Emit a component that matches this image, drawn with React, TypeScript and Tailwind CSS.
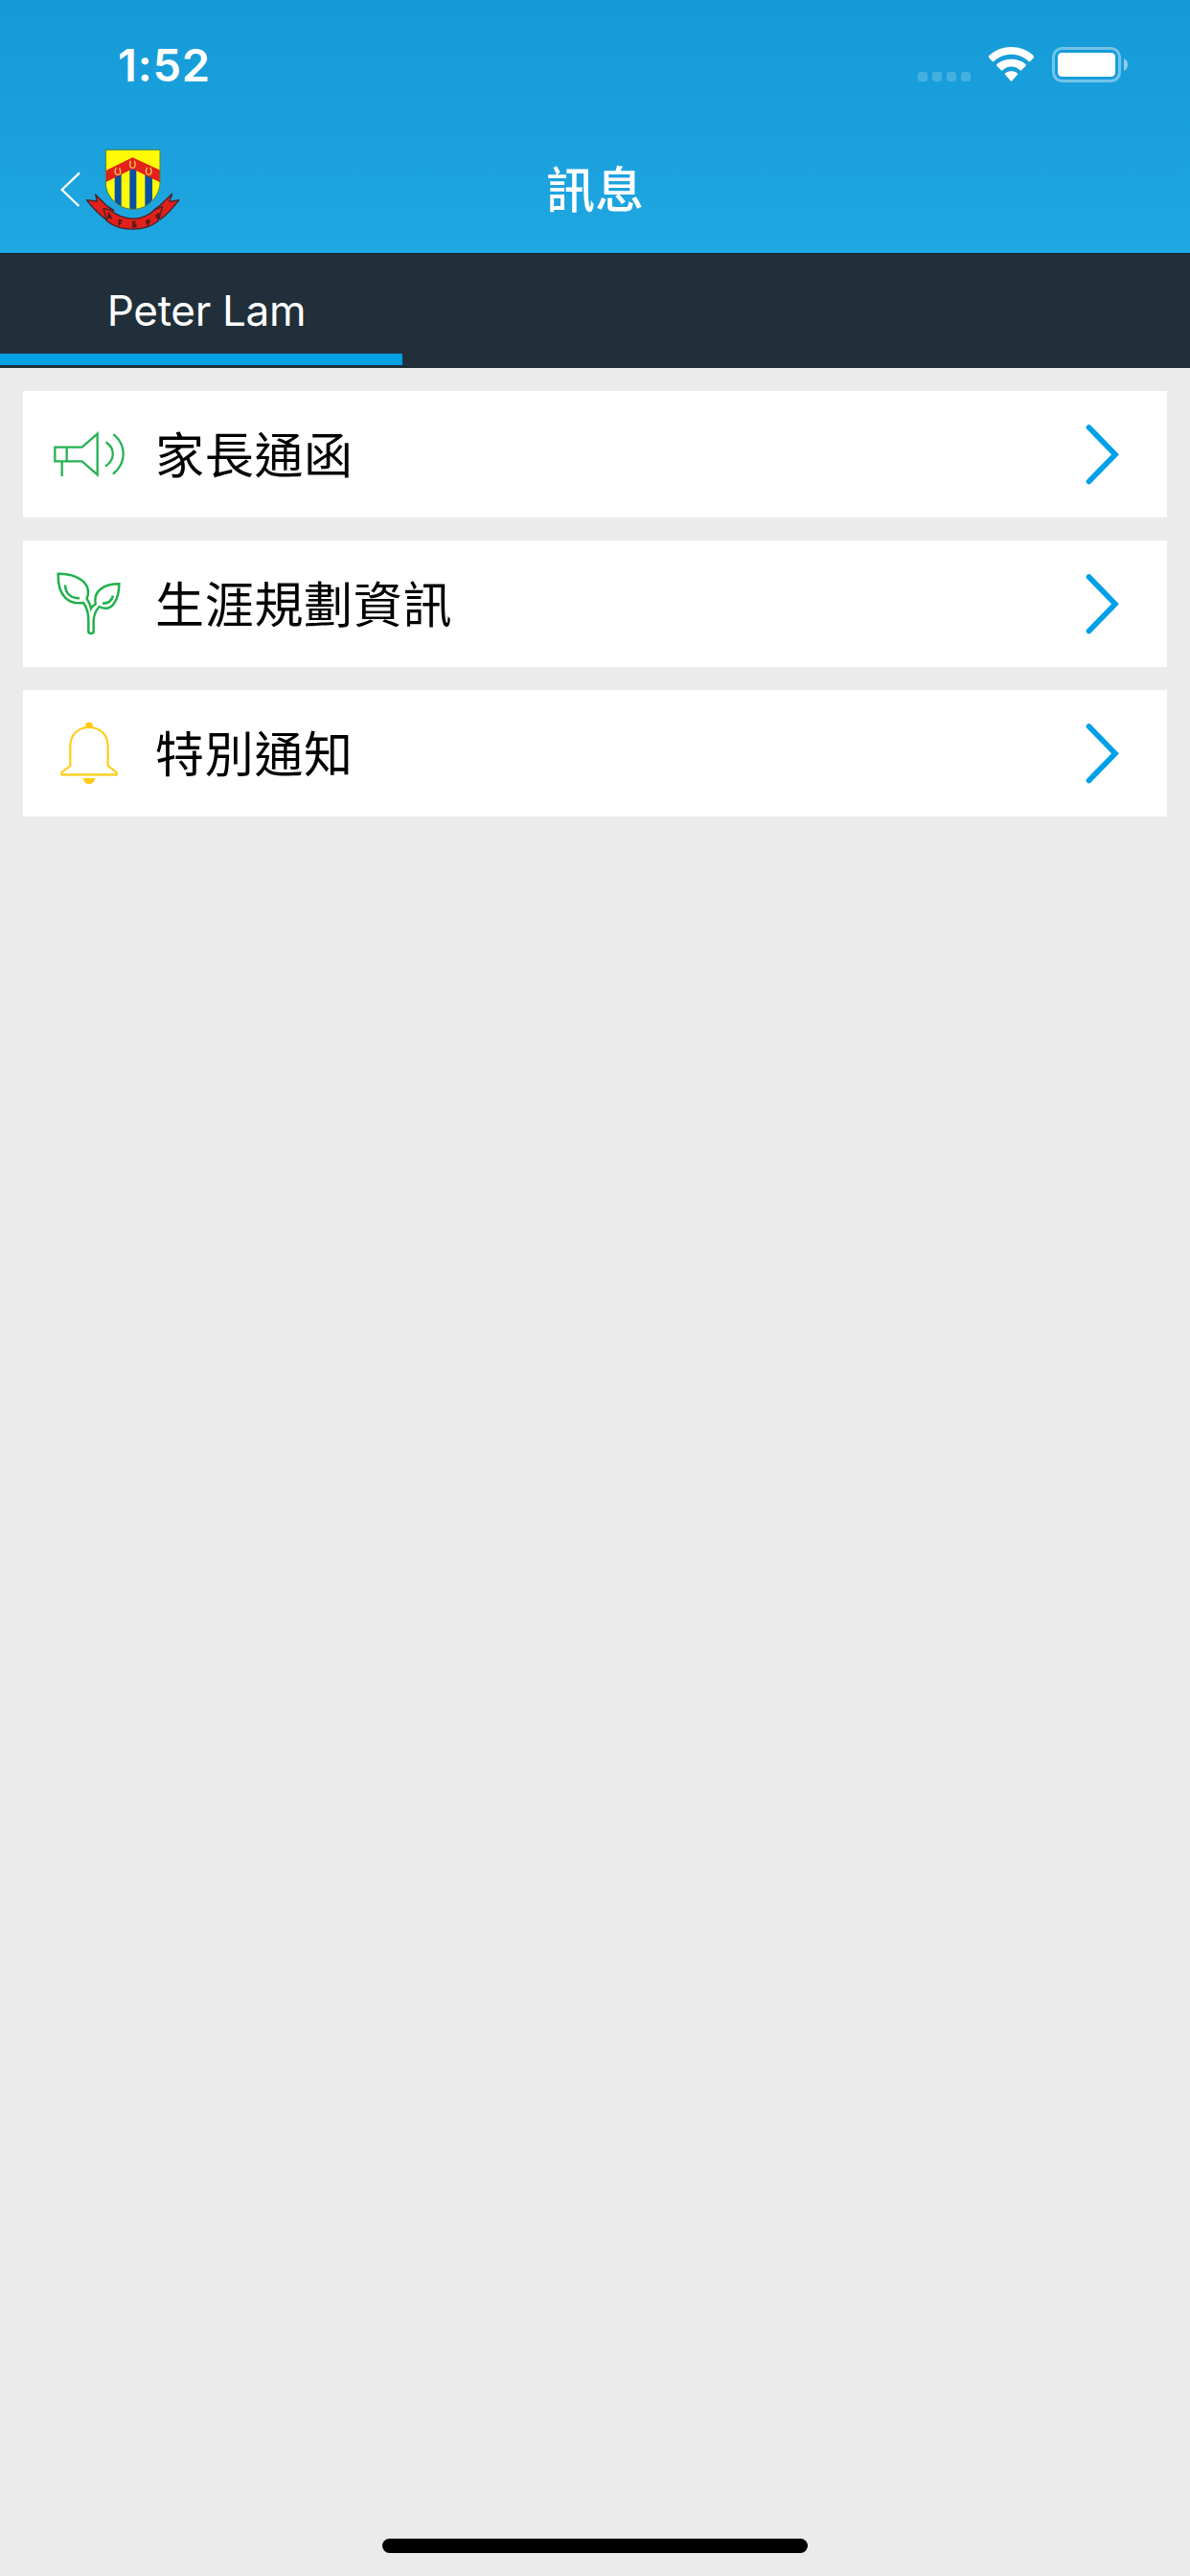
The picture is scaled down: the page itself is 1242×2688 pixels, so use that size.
import type { ReactNode } from "react";

function Megaphone() {
  return (
    <svg className="h-[90px] w-24 shrink-0" viewBox="36 27 288 270" fill="none" stroke="#28b254" strokeWidth="7">
      <path d="M82 140H167L215 98V226L167 184H82Z M119 140V184 M104 184V231" />
      <path d="M244 126C270 144 270 180 242 198 M267 101C306 134 306 188 266 222" strokeLinecap="round" />
    </svg>
  );
}

function Sprout() {
  return (
    <svg className="h-[90px] w-24 shrink-0" viewBox="36 45 288 270" fill="none" stroke="#22b14c" strokeWidth="7.5">
      <path d="M187 266V232C187 212 181 190 171 177C125 184 90 155 92 86C145 84 201 112 182 164C188 172 192 182 195 195C199 188 203 185 209 181C201 138 237 118 283 118C283 166 261 209 221 189C211 200 204 215 203 232V266C203 275 187 275 187 266Z" />
      <path d="M114 121C115 149 133 163 159 163 M264 155C260 171 248 179 231 179" />
    </svg>
  );
}

function Bell() {
  return (
    <svg className="h-[90px] w-24 shrink-0" viewBox="36 33 288 270" fill="none" stroke="#ffcc13" strokeWidth="6.5">
      <path d="M130 207V147C130 109 155 87 189 87C223 87 248 109 248 147V207L275 228V235H103V228Z" />
      <path d="M178 89V77Q178 71 184 71H194Q200 71 200 77V89Z M170 246H208C204 270 174 270 170 246Z" fill="#ffcc13" stroke="none" />
    </svg>
  );
}

function Crest() {
  return (
    <svg className="h-[120px] w-[160px]" viewBox="0 0 480 360">
      <defs>
        <clipPath id="shield">
          <path d="M211 49H381V156C378 195 343 235 297 235C250 235 213 195 211 156Z" />
        </clipPath>
      </defs>
      <path d="M129 121L74 174L127 225" fill="none" stroke="#fff" strokeWidth="7" />
      <g clipPath="url(#shield)">
        <path d="M205 45H390V240H205Z" fill="#fffa08" />
        <path d="M239 110H260V240H239Z M286 100H307V240H286Z M334 110H357V240H334Z" fill="#0751a2" />
        <path d="M205 117L295 73L390 117V155L295 109L205 153Z" fill="#e32119" />
        <path
          d="M243 106C237 120 241 127 249 127C257 127 260 120 254 106 M289 83C284 98 287 106 295 106C303 106 306 98 301 83 M340 104C334 119 338 127 346 127C354 127 356 119 351 104"
          fill="none"
          stroke="#f5c85a"
          strokeWidth="4"
        />
      </g>
      <path d="M211 49H381V156C378 195 343 235 297 235C250 235 213 195 211 156Z" fill="none" stroke="#56803b" strokeWidth="3" />
      <g fill="#df201b" stroke="#41262b" strokeWidth="4" strokeLinejoin="round">
        <path d="M151 206L184 210L179 189L213 223L236 238L213 268C190 252 169 229 151 206Z" />
        <path d="M441 206L411 211L419 187L381 223L361 238L382 267C405 251 423 229 441 206Z" />
        <path d="M204 233L225 237C268 273 326 274 365 236L389 227L375 272C333 305 259 307 215 272Z" />
      </g>
      <path
        d="M217 266L221 250L229 264 M218 261L226 258 M252 287L254 269L262 271 M253 278L260 279 M305 275H297V290H305V283H300 M338 271L344 286 M338 272L346 269L348 276L341 279 M368 254L378 268 M369 254L377 249L379 256L372 261"
        fill="none"
        stroke="#50191c"
        strokeWidth="5"
      />
    </svg>
  );
}

function StatusIcons() {
  return (
    <svg className="h-20 w-[260px]" viewBox="0 0 780 240">
      <g fill="#fff" fillOpacity=".2">
        <rect x="54" y="135" width="30" height="30" rx="9" />
        <rect x="99" y="135" width="30" height="30" rx="9" />
        <rect x="144" y="135" width="30" height="30" rx="9" />
        <rect x="189" y="135" width="30" height="30" rx="9" />
      </g>
      <g fill="#fff">
        <path d="M276 90Q274 87 277 84C316 48 377 48 416 84Q419 87 417 90L406 102Q403 104 400 101C369 73 324 73 293 101Q290 104 287 102Z" />
        <path d="M301 116Q299 113 302 110C327 90 366 90 391 110Q394 113 392 116L379 129Q376 132 373 129C357 115 336 115 320 129Q317 132 314 129Z" />
        <path d="M327 143Q325 140 329 138C339 131 354 131 364 138Q368 140 366 143L349 163Q346.500 166 344 163Z" />
        <rect x="492" y="75" width="180" height="75" rx="13" />
      </g>
      <rect x="478.500" y="61.500" width="207" height="102" rx="27" fill="none" stroke="#fff" strokeOpacity=".4" strokeWidth="9" />
      <path d="M699 93C715 97 715 128 699 132Z" fill="#fff" fillOpacity=".5" />
    </svg>
  );
}

function MessageRow({ icon, label }: { icon: ReactNode; label: string }) {
  return (
    <li className="flex h-[132px] items-center bg-white pl-[18px] pr-[42px]">
      {icon}
      <span className="ml-6 flex-1 pt-[3px] text-[51px] leading-none tracking-[0.7px] text-black">{label}</span>
      <svg className="h-[72px] w-12" viewBox="0 0 48 72" fill="none" stroke="#00a0e9" strokeWidth="5.6" strokeLinecap="round">
        <path d="M8.500 8L36 36.300L8.500 64.500" strokeLinejoin="miter" />
      </svg>
    </li>
  );
}

export default function App() {
  return (
    <div className="flex h-[2688px] w-[1242px] flex-col overflow-hidden bg-[#ebebeb] font-['Inter','Noto_Sans_CJK_TC',sans-serif]">
      <header className="h-[264px] bg-linear-to-b from-[#149ad6] to-[#1fa7e2] text-white">
        <div className="flex h-[132px] items-start justify-between pl-[123px] pr-[42px] pt-[30px]">
          <time className="pt-[10px] text-[47px] leading-[56px] font-semibold tracking-[0.8px]">1:52</time>
          <StatusIcons />
        </div>
        <div className="grid h-[132px] grid-cols-[1fr_auto_1fr] items-center">
          <div className="pl-10 pt-1">
            <Crest />
          </div>
          <h1 className="text-[51px] leading-none font-medium">訊息</h1>
        </div>
      </header>
      <nav className="flex h-[120px] border-t border-b-[3px] border-t-[#17212a] border-b-[#202c36] bg-[#222e38]">
        <button className="flex w-[420px] items-center justify-center border-b-12 border-[#00a0e6] bg-[#202f39] pl-[11px] pt-[13px] text-[44px] leading-none tracking-[-0.3px] text-white">
          Peter Lam
        </button>
      </nav>
      <main className="flex-1 p-6">
        <ul className="flex flex-col gap-6">
          <MessageRow icon={<Megaphone />} label="家長通函" />
          <MessageRow icon={<Sprout />} label="生涯規劃資訊" />
          <MessageRow icon={<Bell />} label="特別通知" />
        </ul>
      </main>
      <div className="mx-auto mb-6 h-[15px] w-[444px] rounded-full bg-black" />
    </div>
  );
}
